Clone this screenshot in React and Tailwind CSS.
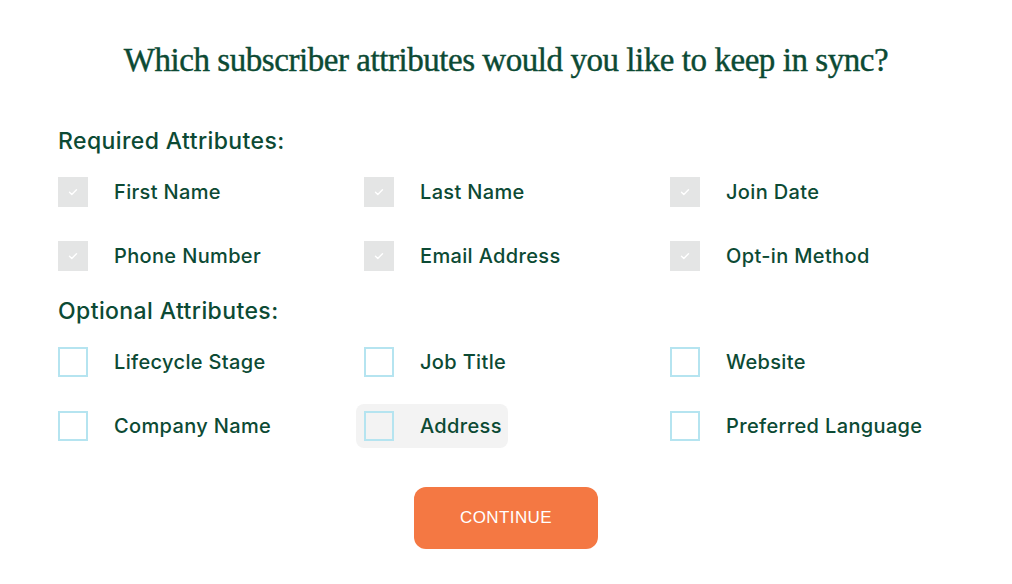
import React from 'react';

const required = [
  ['First Name', 'Last Name', 'Join Date'],
  ['Phone Number', 'Email Address', 'Opt-in Method'],
];

const optional = [
  ['Lifecycle Stage', 'Job Title', 'Website'],
  ['Company Name', 'Address', 'Preferred Language'],
];

const Check = () => (
  <svg width="12" height="12" viewBox="0 0 12 12" fill="none">
    <path d="M2.5 6.2l2.3 2.3 4.7-4.8" stroke="white" strokeWidth="1.4" strokeLinecap="round" strokeLinejoin="round" />
  </svg>
);

const Item = ({ label, checked, hover }) => (
  <div className={`flex items-center h-[44px] ${hover ? 'bg-[#f3f3f3] rounded-lg -ml-2 pl-2 w-[152px]' : ''}`}>
    {checked ? (
      <div className="w-[30px] h-[30px] bg-[#e4e5e5] flex items-center justify-center shrink-0">
        <Check />
      </div>
    ) : (
      <div className="w-[30px] h-[30px] border-2 border-[#b5e4f0] shrink-0" />
    )}
    <span className="ml-[26px] text-[20px] font-medium text-[#0c4a34] tracking-[0.35px] whitespace-nowrap">{label}</span>
  </div>
);

const Section = ({ title, rows, checked }) => (
  <div>
    <h2 className="mt-[2px] text-[23px] h-[23px] font-medium text-[#0c4a34] leading-none tracking-[0.4px]">{title}</h2>
    <div className="mt-[17px] flex flex-col gap-[20px]">
      {rows.map((row, i) => (
        <div key={i} className="grid grid-cols-[306px_306px_306px]">
          {row.map((label) => (
            <Item key={label} label={label} checked={checked} hover={label === 'Address'} />
          ))}
        </div>
      ))}
    </div>
  </div>
);

export default function App() {
  return (
    <div className="w-[1012px] h-[584px] bg-white" style={{ fontFamily: 'Inter, "Noto Sans", sans-serif' }}>
      <h1
        className="pt-[40px] text-center text-[33px] text-[#0c4a34] leading-[40px] tracking-[-0.45px] [-webkit-text-stroke:0.4px_#0c4a34]"
        style={{ fontFamily: '"Liberation Serif", serif' }}
      >
        Which subscriber attributes would you like to keep in sync?
      </h1>
      <div className="pl-[58px] mt-[48px] flex flex-col gap-[20px]">
        <Section title="Required Attributes:" rows={required} checked />
        <Section title="Optional Attributes:" rows={optional} />
      </div>
      <div className="flex justify-center mt-[39px]">
        <button
          className="w-[184px] h-[62px] rounded-xl bg-[#f47843] text-white text-[17px] tracking-[0.4px]"
          style={{ fontFamily: '"Liberation Sans", Arial, sans-serif' }}
        >
          CONTINUE
        </button>
      </div>
    </div>
  );
}
